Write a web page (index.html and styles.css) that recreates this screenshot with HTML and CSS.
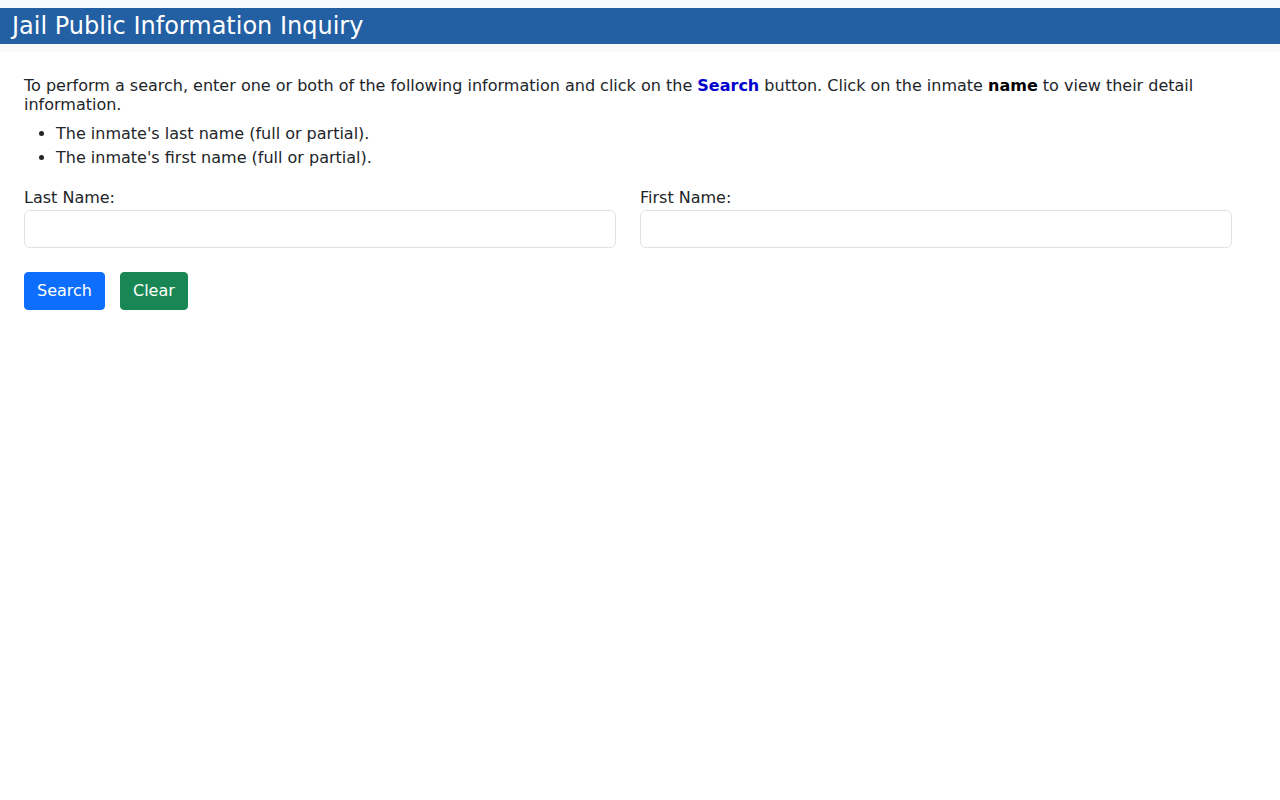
FILE: index.html
```html
<!DOCTYPE html>
<html lang="en">
<head>
<meta charset="utf-8">
<title>Jail Public Information Inquiry</title>
<link rel="stylesheet" href="styles.css">
</head>
<body>
<header class="banner">
  <h1 class="banner-title">Jail Public Information Inquiry</h1>
</header>
<main class="content">
  <p class="intro">To perform a search, enter one or both of the following information and click on the <b class="kw-search">Search</b> button. Click on the inmate <b class="kw-name">name</b> to view their detail information.</p>
  <ul class="hints">
    <li>The inmate's last name (full or partial).</li>
    <li>The inmate's first name (full or partial).</li>
  </ul>
  <form class="search-form">
    <div class="fields">
      <div class="field">
        <label class="field-label" for="lastName">Last Name:</label>
        <input class="field-input" type="text" id="lastName">
      </div>
      <div class="field">
        <label class="field-label" for="firstName">First Name:</label>
        <input class="field-input" type="text" id="firstName">
      </div>
    </div>
    <div class="actions">
      <button type="button" class="btn btn-search">Search</button>
      <button type="button" class="btn btn-clear">Clear</button>
    </div>
  </form>
</main>
</body>
</html>
```

FILE: styles.css
```css
html, body {
  margin: 0;
  padding: 0;
}
body {
  background: #ffffff;
  color: #212529;
  font-family: "DejaVu Sans", sans-serif;
  font-size: 16px;
}
.banner {
  background: #f8f9fa;
  padding: 8px 0;
}
.banner-title {
  margin: 0;
  background: #235fa3;
  color: #ffffff;
  font-weight: 400;
  font-size: 24px;
  line-height: 36px;
  height: 36px;
  padding: 0 12px;
}
.content {
  padding: 24px 48px 0 24px;
}
.intro {
  margin: 0 0 8px 0;
  line-height: 19px;
}
.kw-search {
  color: #0000cd;
  font-weight: 700;
}
.kw-name {
  color: #000000;
  font-weight: 700;
}
.hints {
  margin: 0 0 16px 0;
  padding-left: 32px;
  line-height: 24px;
}
.fields {
  display: flex;
  gap: 24px;
}
.field {
  flex: 1;
  display: flex;
  flex-direction: column;
}
.field-label {
  line-height: 24px;
  margin-bottom: 0;
}
.field-input {
  box-sizing: border-box;
  height: 38px;
  border: 1px solid #dee2e6;
  border-radius: 6px;
  padding: 6px 12px;
  font: inherit;
}
.actions {
  display: flex;
  gap: 15px;
  margin-top: 24px;
}
.btn {
  box-sizing: border-box;
  height: 38px;
  padding: 0 12px 2px 12px;
  border: 1px solid transparent;
  border-radius: 4px;
  color: #ffffff;
  font-family: "DejaVu Sans", sans-serif;
  font-size: 16px;
  cursor: pointer;
}
.btn-search {
  background: #0d6efd;
  border-color: #0d6efd;
}
.btn-clear {
  background: #198754;
  border-color: #198754;
}
```
